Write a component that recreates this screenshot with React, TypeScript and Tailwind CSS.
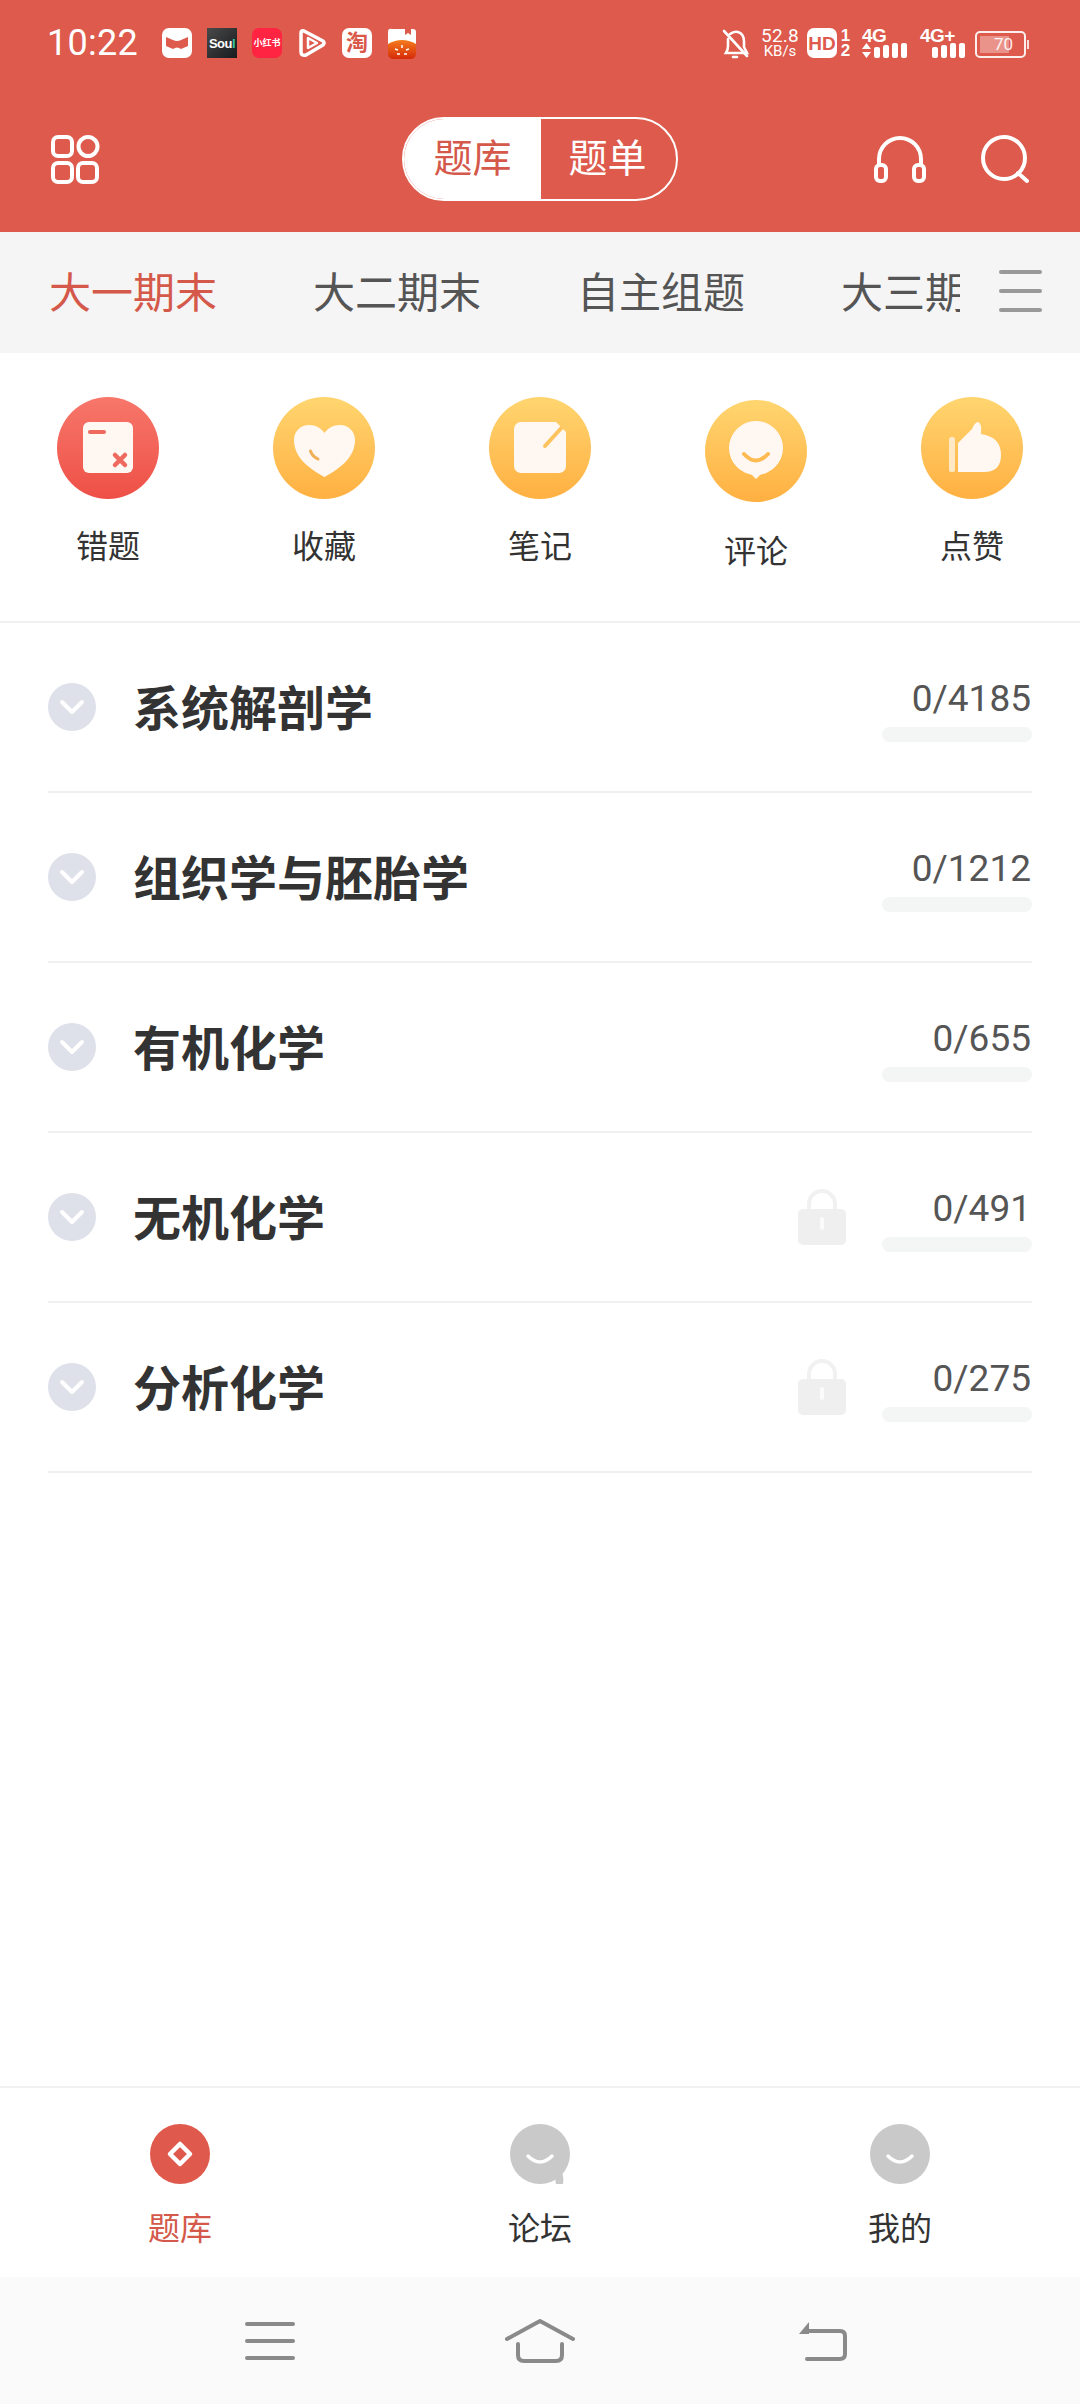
import React from "react";

const subjects = [
  { name: "系统解剖学", count: "0/4185", locked: false },
  { name: "组织学与胚胎学", count: "0/1212", locked: false },
  { name: "有机化学", count: "0/655", locked: false },
  { name: "无机化学", count: "0/491", locked: true },
  { name: "分析化学", count: "0/275", locked: true },
];

function Bars({ count }: { count: number }) {
  const heights = [9, 11, 13, 15, 15].slice(5 - count);
  return (
    <div className="flex items-end gap-[3px]">
      {heights.map((h, i) => (
        <div key={i} className="w-[6px] rounded-[2px] bg-white" style={{ height: h }} />
      ))}
    </div>
  );
}

function StatusBar() {
  return (
    <div className="h-[85px] pt-[28px] pl-[47px] flex items-start text-white">
      <div className="w-[115px] h-[31px] text-[36px] leading-[31px] tracking-[0.3px]">10:22</div>
      <div className="flex gap-[15px]">
        <div className="w-[30px] h-[30px] rounded-[7px] bg-white flex items-center justify-center">
          <svg width="24" height="16" viewBox="0 0 24 16">
            <path d="M1 2 L8 5 Q12 7 16 5 L23 2 V11 L16 14 Q12 11 8 14 L1 11Z" fill="#DD5A4C" />
          </svg>
        </div>
        <div className="w-[30px] h-[30px] bg-linear-to-br from-[#4a4a4a] to-[#181c1e] flex items-center justify-center text-[13px] leading-none font-bold font-['Liberation_Sans'] tracking-[-0.5px]">
          Sou<span className="text-[#34c8a8]">l</span>
        </div>
        <div className="w-[30px] h-[30px] rounded-[7px] bg-[#FF2442] flex items-center justify-center text-[9px] leading-none font-bold whitespace-nowrap">
          小红书
        </div>
        <svg width="30" height="30" viewBox="0 0 30 30">
          <path d="M4 5 Q4 2 7 3 L26 13 Q28 15 26 17 L9 27 Q4 28 4 24Z" fill="none" stroke="white" strokeWidth="3.5" strokeLinejoin="round" />
          <path d="M11 10 L20 15 L11 20Z" fill="none" stroke="white" strokeWidth="2.5" strokeLinejoin="round" />
        </svg>
        <div className="w-[30px] h-[30px] rounded-[7px] bg-white flex items-center justify-center text-[22px] leading-none font-bold text-[#D9584A]">
          淘
        </div>
        <svg width="30" height="31" viewBox="0 0 30 31">
          <defs>
            <linearGradient id="bun" x1="0" y1="0" x2="0" y2="1">
              <stop offset="0" stopColor="#f47c1e" />
              <stop offset="1" stopColor="#d62a08" />
            </linearGradient>
          </defs>
          <path d="M1 4 Q1 0 5 1 L18 1 V7 L21 5 L24 7 V1 L26 1 Q29 1 29 4 V16 H1Z" fill="white" />
          <path d="M1 16 Q15 8 29 16 V25 Q29 31 23 31 H7 Q1 31 1 25Z" fill="url(#bun)" />
          <path d="M15 17 v3 M8 21 l3 1 M22 21 l-3 1 M10 26 h3 M17 26 h3" stroke="white" strokeWidth="1.5" fill="none" />
        </svg>
      </div>
      <div className="ml-[305px] flex items-start">
        <svg width="27" height="30" viewBox="0 0 27 30" fill="none" stroke="white" strokeWidth="2.6" strokeLinecap="round" className="mt-[1px]">
          <path d="M8 5 Q12 2 16 3 Q22 5 22 12 V18 L25 24 H4 Q6 21 6 17 V10" />
          <path d="M2 2 L25 27" />
          <path d="M11 28 H15" />
        </svg>
        <div className="ml-[11px] w-[40px] flex flex-col items-center">
          <div className="text-[19px] leading-[16px] tracking-[0.2px]">52.8</div>
          <div className="text-[15px] leading-[14px]">KB/s</div>
        </div>
        <div className="ml-[7px] w-[30px] h-[30px] rounded-[7px] bg-white flex items-center justify-center text-[#DD5A4C] text-[19px] leading-none font-black font-['Liberation_Sans']">
          HD
        </div>
        <div className="ml-[3px] w-[11px] flex flex-col items-center font-bold text-[17px] leading-[15px] font-['Liberation_Sans']">
          <span>1</span>
          <span>2</span>
        </div>
        <div className="ml-[11px] flex flex-col">
          <div className="text-[19px] leading-[16px] font-bold font-['Liberation_Sans'] tracking-[-0.5px]">4G</div>
          <div className="flex items-end gap-[3px] mt-[-1px]">
            <svg width="9" height="15" viewBox="0 0 9 15" fill="white">
              <path d="M4.5 0 L9 6 H0Z" />
              <path d="M0 9 H9 L4.5 15Z" />
            </svg>
            <Bars count={4} />
          </div>
        </div>
        <div className="ml-[13px] flex flex-col">
          <div className="text-[19px] leading-[16px] font-bold font-['Liberation_Sans'] tracking-[-0.5px]">4G+</div>
          <div className="flex justify-end mt-[-1px] ml-[12px]">
            <Bars count={4} />
          </div>
        </div>
        <div className="ml-[10px] mt-[3px] flex items-center">
          <div className="relative w-[51px] h-[27px] rounded-[5px] border-2 border-white/90 p-[3px]">
            <div className="w-[29px] h-full bg-white/35" />
            <div className="absolute inset-0 pl-[6px] flex items-center justify-center text-[17px] leading-none text-white/90">70</div>
          </div>
          <div className="w-[2px] h-[9px] ml-[1px] bg-white/80" />
        </div>
      </div>
    </div>
  );
}

function Header() {
  return (
    <div className="flex-1 grid grid-cols-[1fr_auto_1fr] items-center">
      <div className="pl-[50px] flex">
        <svg width="50" height="50" viewBox="0 0 50 50" fill="none" stroke="white" strokeWidth="4">
          <rect x="3" y="3" width="19" height="19" rx="5" />
          <circle cx="38" cy="12.5" r="9.5" />
          <rect x="3" y="29" width="19" height="19" rx="5" />
          <rect x="28" y="29" width="19" height="19" rx="5" />
        </svg>
      </div>
      <div className="w-[276px] h-[84px] flex rounded-full border-2 border-white overflow-hidden text-[39px] leading-[50px]">
        <div className="w-[137px] bg-white text-[#D4594A] flex items-center justify-center">题库</div>
        <div className="flex-1 text-white flex items-center justify-center pr-[2px]">题单</div>
      </div>
      <div className="flex justify-end items-center pr-[50px] gap-[52px]">
        <svg width="56" height="50" viewBox="0 0 56 50" fill="none" stroke="white" strokeWidth="4" strokeLinecap="round">
          <path d="M7 30 V25 A21 21 0 0 1 49 25 V30" />
          <rect x="4" y="31" width="10" height="16" rx="4" />
          <rect x="42" y="31" width="10" height="16" rx="4" />
        </svg>
        <svg width="50" height="50" viewBox="0 0 50 50" fill="none" stroke="white" strokeWidth="4" strokeLinecap="round">
          <circle cx="24" cy="24" r="21" />
          <path d="M38 39 L47 47" />
        </svg>
      </div>
    </div>
  );
}

function Tabs() {
  const tabs = ["大一期末", "大二期末", "自主组题", "大三期末"];
  return (
    <div className="h-[121px] bg-[#F5F5F5] flex items-center">
      <div className="w-[960px] pl-[49px] flex gap-[96px] overflow-hidden whitespace-nowrap text-[42px] leading-[60px] text-[#555555] pt-[2px]">
        {tabs.map((t, i) => (
          <span key={t} className={i === 0 ? "text-[#D4594A]" : ""}>{t}</span>
        ))}
      </div>
      <div className="ml-[39px] w-[43px] flex flex-col gap-[15px] mb-[3px]">
        <div className="h-[4px] rounded-full bg-[#999999]" />
        <div className="h-[4px] rounded-full bg-[#999999]" />
        <div className="h-[4px] rounded-full bg-[#999999]" />
      </div>
    </div>
  );
}

function ShortcutIcon({ name }: { name: string }) {
  const fill = "#FFF8F2";
  if (name === "错题") {
    return (
      <svg width="102" height="102" viewBox="0 0 102 102">
        <rect x="26" y="25" width="50" height="51" rx="6" fill={fill} />
        <path d="M33 35 H47" stroke="#EE6A5E" strokeWidth="4" strokeLinecap="round" />
        <path d="M58 58 L68 68 M68 58 L58 68" stroke="#EE6A5E" strokeWidth="4.5" strokeLinecap="round" />
      </svg>
    );
  }
  if (name === "收藏") {
    return (
      <svg width="102" height="102" viewBox="0 0 102 102">
        <path d="M51.5 80 C35 71 21 60 21 43 C21 34 28 28 36 28 C43 28 48 31 51.5 36 C55 31 60 28 67 28 C75 28 82 34 82 43 C82 60 68 71 51.5 80Z" fill={fill} />
        <path d="M37.5 54 Q39 59 45 62" fill="none" stroke="#F0B05A" strokeWidth="3" strokeLinecap="round" />
      </svg>
    );
  }
  if (name === "笔记") {
    return (
      <svg width="102" height="102" viewBox="0 0 102 102">
        <rect x="25" y="25" width="52" height="51" rx="7" fill={fill} />
        <path d="M56 49 L76 27" stroke="#FDC35E" strokeWidth="4" strokeLinecap="round" />
        <path d="M66 24 H80 V38Z" fill="#FDCB63" />
      </svg>
    );
  }
  if (name === "评论") {
    return (
      <svg width="102" height="102" viewBox="0 0 102 102">
        <circle cx="51" cy="48" r="27" fill={fill} />
        <path d="M44 72 H58 L51 79Z" fill={fill} />
        <path d="M39 54 Q51 67 63 54" fill="none" stroke="#FDBB52" strokeWidth="4" strokeLinecap="round" />
      </svg>
    );
  }
  return (
    <svg width="102" height="102" viewBox="0 0 102 102">
      <rect x="28" y="40" width="6" height="35" rx="2" fill="#FFE9C4" />
      <path d="M37 75 V46 L51 32 Q54 25 57 25 Q61 26 60 37 Q80 40 80 58 Q80 75 63 75Z" fill={fill} />
    </svg>
  );
}

function Shortcuts() {
  const items = ["错题", "收藏", "笔记", "评论", "点赞"];
  return (
    <div className="h-[270px] border-b-2 border-[#F1F1F1] grid grid-cols-5">
      {items.map((name) => {
        const shifted = name === "评论";
        return (
          <div key={name} className={`flex flex-col items-center ${shifted ? "pt-[47px]" : "pt-[44px]"}`}>
            <div
              className={
                name === "错题"
                  ? "w-[102px] h-[102px] rounded-full bg-linear-to-b from-[#F7766A] to-[#EE4F46]"
                  : "w-[102px] h-[102px] rounded-full bg-linear-to-b from-[#FFD56F] to-[#FFB040]"
              }
            >
              <ShortcutIcon name={name} />
            </div>
            <div className={`text-[32px] leading-[44px] text-[#333333] ${shifted ? "mt-[28px]" : "mt-[26px]"}`}>{name}</div>
          </div>
        );
      })}
    </div>
  );
}

function Lock() {
  return (
    <svg width="48" height="56" viewBox="0 0 48 56" className="mr-[36px] shrink-0">
      <path d="M11 22 V15 A13 13 0 0 1 37 15 V22" fill="none" stroke="#F1F1F1" strokeWidth="4" />
      <rect x="0" y="20" width="48" height="36" rx="5" fill="#EFEFEF" />
      <rect x="22" y="28" width="4" height="13" rx="2" fill="#FBFBFB" />
    </svg>
  );
}

function Row({ name, count, locked }: { name: string; count: string; locked: boolean }) {
  return (
    <div className="h-[170px] border-b-2 border-[#F0F0F0] flex items-center">
      <div className="w-[48px] h-[48px] rounded-full bg-[#DFE1EA] flex items-center justify-center shrink-0">
        <svg width="26" height="16" viewBox="0 0 26 16" fill="none" stroke="white" strokeWidth="4" strokeLinecap="round" strokeLinejoin="round">
          <path d="M3 3 L13 13 L23 3" />
        </svg>
      </div>
      <div className="ml-[37px] pt-[5px] flex-1 text-[48px] leading-[60px] font-bold text-[#333333]">{name}</div>
      {locked && <Lock />}
      <div className="w-[150px] pt-[4px] flex flex-col items-end shrink-0">
        <div className="pr-[1px] text-[37px] leading-[40px] text-[#555555] pt-[3px] mb-[-3px]">{count}</div>
        <div className="mt-[11px] w-full h-[15px] rounded-full bg-[#F4F5F5]" />
      </div>
    </div>
  );
}

function NavIcon({ kind }: { kind: number }) {
  if (kind === 0) {
    return (
      <svg width="60" height="60" viewBox="0 0 60 60">
        <circle cx="30" cy="30" r="30" fill="#DF5A4C" />
        <path d="M30 20 L40 30 L30 40 L20 30Z" fill="none" stroke="white" strokeWidth="4.5" strokeLinejoin="round" />
      </svg>
    );
  }
  return (
    <svg width="60" height="60" viewBox="0 0 60 60">
      <circle cx="30" cy="30" r="30" fill="#C9C9C9" />
      {kind === 1 && <path d="M44 48 H52 Q54 55 53 60 H46Z" fill="#C9C9C9" />}
      <path d="M18 32 Q30 44 42 32" fill="none" stroke="white" strokeWidth="3.5" strokeLinecap="round" />
    </svg>
  );
}

function BottomNav() {
  const items = ["题库", "论坛", "我的"];
  return (
    <div className="h-[191px] border-t-2 border-[#F1F1F1] grid grid-cols-3 pt-[36px]">
      {items.map((label, i) => (
        <div key={label} className="flex flex-col items-center">
          <NavIcon kind={i} />
          <div className={`mt-[25px] text-[32px] leading-[40px] ${i === 0 ? "text-[#D4594A]" : "text-[#333333]"}`}>{label}</div>
        </div>
      ))}
    </div>
  );
}

function SystemBar() {
  return (
    <div className="h-[127px] bg-[#FAFAFA] flex items-center justify-center pl-[12px]">
      <div className="w-[50px] flex flex-col gap-[13px] mr-[210px]">
        <div className="h-[4px] rounded-full bg-[#8A8A8A]" />
        <div className="h-[4px] rounded-full bg-[#8A8A8A]" />
        <div className="h-[4px] rounded-full bg-[#8A8A8A]" />
      </div>
      <svg width="70" height="44" viewBox="0 0 70 44" fill="none" stroke="#8A8A8A" strokeWidth="4" strokeLinecap="round" strokeLinejoin="round" className="mr-[223px]">
        <path d="M2 20 L35 2 L68 20" />
        <path d="M13 25 V36 Q13 42 19 42 H51 Q57 42 57 36 V25" />
      </svg>
      <svg width="50" height="42" viewBox="0 0 50 42" fill="none" stroke="#8A8A8A" strokeWidth="4" strokeLinejoin="round">
        <path d="M7 11 H42 Q47 11 47 16 V34 Q47 39 42 39 H9" strokeLinecap="round" />
        <path d="M11 2 V14 H1Z" fill="#8A8A8A" stroke="none" />
      </svg>
    </div>
  );
}

export default function App() {
  return (
    <div className="w-[1080px] h-[2404px] flex flex-col bg-white font-['Roboto','Noto_Sans_CJK_SC',sans-serif]">
      <div className="h-[232px] bg-[#DD5A4C] flex flex-col">
        <StatusBar />
        <Header />
      </div>
      <Tabs />
      <Shortcuts />
      <div className="px-[48px] flex-1">
        {subjects.map((s) => (
          <Row key={s.name} {...s} />
        ))}
      </div>
      <BottomNav />
      <SystemBar />
    </div>
  );
}
